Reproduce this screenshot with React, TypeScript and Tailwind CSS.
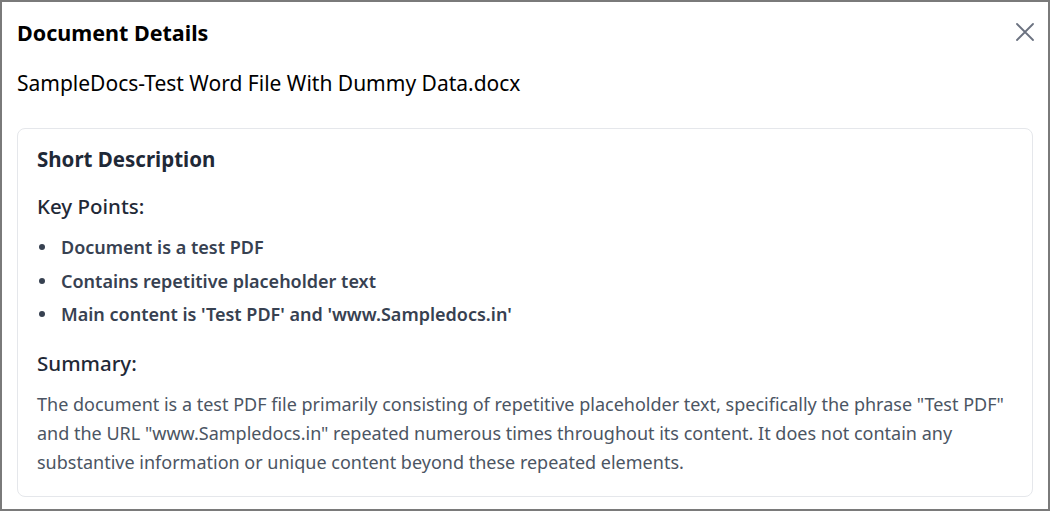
const keyPoints = [
    "Document is a test PDF",
    "Contains repetitive placeholder text",
    "Main content is 'Test PDF' and 'www.Sampledocs.in'",
];

const summary =
    'The document is a test PDF file primarily consisting of repetitive placeholder text, specifically the phrase "Test PDF" and the URL "www.Sampledocs.in" repeated numerous times throughout its content. It does not contain any substantive information or unique content beyond these repeated elements.';

function CloseIcon() {
    return (
        <svg width="18" height="18" viewBox="0 0 18 18" fill="none" stroke="#6b7280" strokeWidth="1.8" strokeLinecap="round">
            <path d="M1 1L17 17M17 1L1 17" />
        </svg>
    );
}

export default function App() {
    return (
        <div className="w-[1050px] h-[511px] overflow-hidden bg-white border-2 border-[#7a7a7a] font-['Noto_Sans',sans-serif]">
            <div className="px-[15px] pt-[16px]">
                {/* Header */}
                <div className="flex items-center justify-between h-[30px]">
                    <h2 className="text-[21.5px] font-bold text-black leading-[30px]">Document Details</h2>
                    <button className="-mr-[1px] -mt-[2px] p-0" aria-label="Close">
                        <CloseIcon />
                    </button>
                </div>

                {/* File name */}
                <p className="mt-[21px] text-[21px] leading-[28px] text-black">
                    SampleDocs-Test Word File With Dummy Data.docx
                </p>

                {/* Card */}
                <div className="mt-[31px] border border-[#e5e7eb] rounded-lg px-[19px] pt-4 pb-[19px]">
                    <h3 className="text-[20.5px] font-bold leading-[28px] text-[#1f2937]">Short Description</h3>
                    <h4 className="mt-[19px] text-[20.5px] font-medium leading-[28px] text-[#1f2937]">Key Points:</h4>
                    <ul className="mt-[15px] flex flex-col gap-[9.5px]">
                        {keyPoints.map((point, index) => (
                            <li key={index} className="flex items-center text-[18px] font-semibold leading-[24px] text-[#374151]">
                                <span className="w-[6px] h-[6px] rounded-full bg-[#374151] ml-[2px] mr-[16px]" />
                                {point}
                            </li>
                        ))}
                    </ul>
                    <h4 className="mt-[23px] text-[20.5px] font-medium leading-[28px] text-[#1f2937]">Summary:</h4>
                    <p className="mt-[13px] text-[18px] leading-[29px] text-[#4b5563]">{summary}</p>
                </div>
            </div>
        </div>
    );
}
